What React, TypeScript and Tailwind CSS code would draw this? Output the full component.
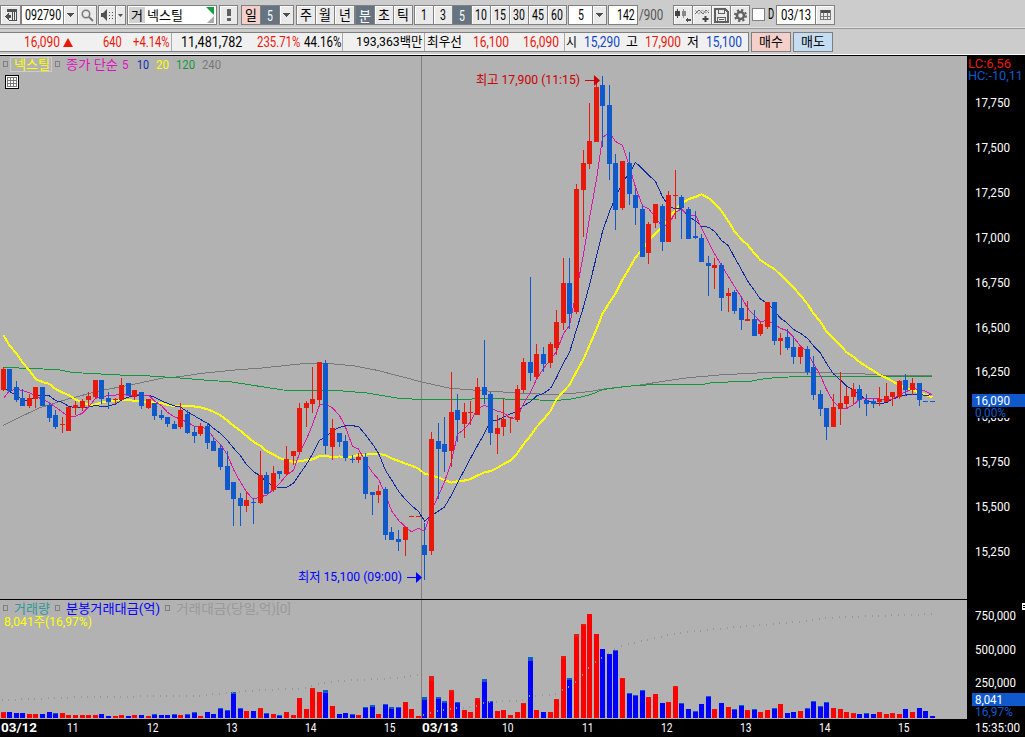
import React, { useLayoutEffect, useRef, useState } from "react";
import clsx from "clsx";

// [high, body top, body bottom, low, up]
const candles = [
  [367, 369, 390, 391, 1], [369, 369, 391, 392, 0], [381, 387, 400, 402, 0], [389, 398, 406, 406, 0],
  [394, 398, 406, 408, 1], [387, 387, 399, 408, 1], [387, 387, 406, 406, 0], [403, 405, 418, 422, 0],
  [410, 415, 427, 429, 0], [417, 424, 425, 433, 1], [407, 407, 431, 431, 1], [401, 405, 408, 415, 1],
  [399, 401, 408, 411, 1], [392, 396, 400, 406, 1], [380, 380, 397, 399, 1], [380, 380, 399, 404, 0],
  [392, 398, 402, 409, 0], [398, 399, 400, 404, 1], [378, 385, 400, 400, 1], [383, 383, 395, 396, 0],
  [390, 390, 397, 400, 1], [392, 392, 406, 409, 0], [399, 399, 408, 409, 1], [403, 403, 416, 420, 0],
  [410, 415, 418, 420, 0], [417, 417, 424, 427, 0], [421, 424, 429, 429, 0], [403, 410, 427, 429, 1],
  [410, 414, 433, 434, 0], [426, 432, 436, 443, 0], [423, 426, 434, 436, 1], [423, 426, 443, 449, 0],
  [437, 441, 451, 451, 0], [444, 448, 467, 470, 0], [451, 466, 490, 490, 0], [482, 482, 499, 526, 0],
  [493, 498, 506, 526, 0], [491, 500, 506, 512, 1], [498, 502, 503, 524, 0], [451, 475, 503, 504, 1],
  [472, 475, 494, 494, 0], [466, 473, 490, 492, 1], [471, 471, 474, 479, 0], [446, 459, 474, 476, 1],
  [451, 451, 456, 465, 1], [403, 408, 452, 454, 1], [401, 403, 408, 427, 1], [367, 399, 404, 413, 1],
  [362, 362, 400, 406, 1], [360, 363, 446, 454, 0], [419, 428, 447, 460, 1], [433, 433, 442, 447, 0],
  [435, 441, 458, 461, 0], [455, 459, 460, 463, 0], [453, 457, 460, 463, 1], [453, 457, 494, 499, 0],
  [492, 492, 495, 515, 0], [485, 491, 495, 503, 1], [487, 489, 535, 540, 0], [527, 532, 540, 540, 0],
  [530, 539, 542, 551, 0], [527, 527, 540, 556, 1], [516, 516, 517, 517, 1], [516, 516, 517, 517, 1],
  [523, 545, 555, 580, 0], [432, 439, 551, 555, 1], [423, 441, 449, 499, 0], [417, 444, 452, 472, 0],
  [372, 412, 451, 467, 1], [394, 410, 420, 442, 0], [403, 412, 424, 438, 1], [401, 412, 413, 425, 1],
  [378, 387, 415, 415, 1], [340, 387, 395, 404, 0], [392, 394, 433, 445, 0], [415, 428, 434, 454, 1],
  [399, 419, 427, 436, 1], [417, 417, 418, 433, 1], [385, 389, 420, 422, 1], [358, 362, 390, 393, 1],
  [277, 362, 373, 381, 0], [344, 354, 377, 379, 1], [347, 354, 364, 372, 0], [342, 344, 363, 368, 1],
  [310, 322, 348, 355, 1], [258, 283, 323, 330, 1], [258, 283, 314, 329, 0], [184, 189, 312, 314, 1],
  [150, 163, 190, 237, 1], [103, 141, 164, 169, 1], [80, 87, 142, 142, 1], [76, 85, 106, 147, 0],
  [85, 105, 164, 180, 0], [154, 163, 210, 230, 0], [161, 161, 208, 210, 1], [152, 163, 194, 205, 0],
  [189, 195, 208, 225, 0], [205, 209, 257, 257, 0], [222, 224, 253, 264, 1], [204, 204, 223, 228, 1],
  [204, 206, 242, 251, 0], [191, 195, 242, 242, 1], [170, 195, 196, 219, 1], [195, 197, 208, 239, 0],
  [207, 209, 239, 239, 0], [211, 236, 238, 239, 0], [234, 238, 262, 262, 0], [256, 263, 266, 296, 0],
  [258, 265, 268, 289, 1], [263, 265, 298, 311, 0], [288, 293, 296, 312, 1], [290, 292, 311, 314, 0],
  [297, 308, 320, 330, 0], [301, 319, 321, 321, 1], [310, 319, 336, 336, 0], [322, 324, 334, 336, 1],
  [302, 302, 327, 329, 1], [302, 302, 341, 345, 0], [333, 338, 341, 355, 1], [329, 337, 348, 350, 0],
  [337, 347, 357, 364, 0], [347, 347, 357, 364, 1], [346, 349, 372, 375, 0], [356, 367, 395, 400, 0],
  [390, 394, 409, 416, 0], [408, 408, 427, 440, 0], [394, 407, 427, 427, 1], [372, 403, 409, 425, 1],
  [387, 396, 404, 408, 1], [383, 389, 397, 405, 1], [385, 389, 400, 408, 0], [394, 400, 404, 416, 0],
  [399, 401, 404, 408, 0], [387, 399, 402, 406, 1], [383, 396, 402, 402, 1], [392, 392, 397, 406, 1],
  [380, 381, 397, 399, 1], [374, 380, 390, 396, 0], [378, 383, 390, 395, 1], [383, 383, 400, 406, 0],
  [401, 401, 402, 402, 0], [401, 401, 402, 402, 0],
];

// volume heights, one per candle
const volumes = [
  6, 6, 5, 5, 4, 4, 4, 6, 5, 5, 3, 3, 3, 3, 3, 4, 2, 2, 3, 2, 3, 3, 2, 4, 3, 3, 4, 3, 4, 6, 2, 6, 4, 10, 8, 26, 10, 7, 7, 10,
  5, 4, 3, 6, 3, 20, 9, 30, 26, 28, 12, 4, 5, 4, 3, 11, 13, 4, 14, 11, 11, 16, 9, 2, 21, 42, 21, 17, 28, 16, 8, 6, 20, 39, 17,
  7, 8, 3, 6, 15, 61, 8, 6, 6, 19, 62, 40, 84, 94, 104, 84, 69, 64, 68, 40, 25, 23, 28, 21, 24, 15, 16, 32, 15, 9, 7, 14, 22,
  9, 15, 11, 9, 13, 8, 9, 6, 8, 10, 14, 5, 6, 7, 10, 17, 12, 16, 10, 9, 6, 5, 4, 5, 4, 6, 4, 5, 4, 9, 6, 10, 7, 2,
];

// how far the traded amount stays below the volume
const caps: Record<number, number> = {
  0: 1, 8: 1, 23: 1, 26: 1, 28: 1, 29: 1, 33: 1, 34: 1, 35: 2, 36: 1, 39: 1, 40: 1, 42: 1, 47: 2, 49: 3, 53: 1, 55: 1,
  56: 2, 58: 1, 59: 2, 60: 1, 64: 3, 65: 5, 66: 2, 67: 2, 68: 2, 69: 1, 72: 2, 73: 3, 74: 1, 79: 1, 80: 4, 84: 1, 85: 3,
  86: 2, 87: 3, 88: 2, 93: 1, 94: 1, 95: 1, 96: 1, 97: 1, 102: 1, 103: 1, 105: 1, 107: 1, 111: 1, 112: 1, 114: 1, 117: 1,
  122: 1, 123: 1, 124: 1, 125: 1, 129: 1, 131: 1, 135: 1,
};

// [index, y] knots of the cumulative amount, restarted every day
const cumulative = [
  [[0, 699], [5, 698], [10, 696.5], [20, 695.5], [30, 694.5], [34, 692], [36, 690.5], [40, 689], [45, 687.5], [46, 686.5],
   [47, 684.5], [48, 682.5], [50, 680.5], [54, 679], [57, 678], [60, 676.5], [63, 674]],
  [[64, 714], [65, 712], [66, 710], [67, 709], [68, 708], [69, 707], [71, 706], [72, 705], [73, 702], [76, 700], [78, 700],
   [79, 699], [80, 695], [82, 694], [84, 693], [85, 689], [86, 686], [87, 681], [88, 674], [89, 667], [90, 661], [91, 657],
   [92, 652], [93, 648], [94, 645], [95, 643], [97, 640], [99, 637], [102, 633], [104, 631], [107, 629], [110, 627],
   [113, 625], [116, 624], [118, 622], [121, 621], [123, 619], [125, 617], [128, 616], [132, 615], [137, 614], [141, 613]],
];

const ma120 =
  "3,367.5 35,368.5 60,370 73,372.5 120,375 150,376 180,378 210,380.5 230,381.7 253,385.3 283,390 343,391 367,393 400,398.5 423,399.5 457,400 477,398.7 500,398.5 510,399.5 557,400.3 570,399.3 583,396.7 593,393.7 603,389.5 627,386.3 653,384.5 703,384.3 713,382.5 750,381.3 767,378.3 797,376.5 932,376.5";
const ma240 =
  "3,425.5 20,417 40,407.7 67,399.3 100,390.7 127,385.7 163,378 180,376.7 200,373.5 240,369.5 257,368.5 303,363.7 330,363.7 353,365.7 377,370.3 407,378 423,382.3 450,388.3 477,390.3 510,392.5 550,394.5 570,393.7 590,391.5 607,388.5 640,385 667,380.7 690,377.5 723,374.7 767,372.5 833,373 865,374 890,375.5 932,375.5";

const px = (i: number) => Math.floor(3 + 6.591 * i);
const closes = candles.map(([, t, b, , up]) => (up ? t : b - 1));

function average(n: number, head: number[]) {
  return closes
    .map((_, i) => {
      if (i < head.length) return head[i];
      const part = closes.slice(i - n + 1, i + 1);
      return part.reduce((a, b) => a + b, 0) / n;
    })
    .map((y, i) => `${px(i) + 0.5},${(y + 0.5).toFixed(1)}`)
    .join(" ");
}

const ma5 = average(5, [398, 390, 389, 390]);
const ma10 = average(10, [387, 391, 395, 399, 401, 395, 394.5, 395.5, 400]);
const ma20 = average(20, [
  334.5, 345, 353, 362, 370, 378.5, 381.5, 383.5, 388.5, 392, 394.5, 399, 402, 404, 404, 402, 400.5, 400, 399,
]);

function interpolate(knots: number[][], i: number) {
  for (let k = 1; k < knots.length; k++) {
    const [x0, y0] = knots[k - 1];
    const [x1, y1] = knots[k];
    if (i <= x1) return y0 + ((y1 - y0) * (i - x0)) / (x1 - x0);
  }
  return knots[knots.length - 1][1];
}

const font = "font-['Roboto','Noto_Sans_CJK_KR',sans-serif]";

// Squeezes or stretches one line of text to the width of its box
function Fit({ children, className }: { children: string; className?: string }) {
  const box = useRef<HTMLSpanElement>(null);
  const text = useRef<HTMLSpanElement>(null);
  const [scale, setScale] = useState(1);

  useLayoutEffect(() => {
    if (!box.current || !text.current) return;
    setScale(box.current.clientWidth / text.current.offsetWidth);
  }, [children]);

  return (
    <span ref={box} className={clsx("block shrink-0 whitespace-nowrap", className)}>
      <span ref={text} className="inline-block origin-left" style={{ transform: `scaleX(${scale})` }}>
        {children}
      </span>
    </span>
  );
}

interface LabelProps {
  x: number;
  y: number;
  w: number;
  fill: string;
  size?: number;
  bold?: boolean;
  children: string;
}

// y is the vertical middle of the digits
function Label({ x, y, w, fill, size = 13.5, bold, children }: LabelProps) {
  return (
    <text
      x={x}
      y={y + 4.5}
      fill={fill}
      fontSize={size}
      fontWeight={bold ? 700 : 400}
      textLength={w}
      lengthAdjust="spacingAndGlyphs"
    >
      {children}
    </text>
  );
}

function Cell({ className, children }: { className?: string; children?: React.ReactNode }) {
  return (
    <div
      className={clsx(
        "-ml-px flex h-5 shrink-0 items-center justify-center border border-[#808080] text-[14px] leading-none",
        className
      )}
    >
      {children}
    </div>
  );
}

function Caret() {
  return (
    <svg width="7" height="4" shapeRendering="crispEdges">
      <path d="M0 0h7L3.5 4z" fill="#505050" />
    </svg>
  );
}

const face = "bg-[#eaeaea] shadow-[inset_1px_1px_0_#fff]";

function Toolbar() {
  return (
    <div className="flex h-[28px] items-start border-b border-[#e0e0e0] pt-[5px] text-black">
      <Cell className={clsx("ml-0 w-[21px]", face)}>
        <svg width="14" height="14" shapeRendering="crispEdges">
          <path d="M3 1.500h9.500v11H5M8.500 1v12M10.500 1v12" fill="none" stroke="#505050" />
          <path d="M3 2h9v2H3zM1 8l4-4v3h2v3H5v3z" fill="#505050" />
        </svg>
      </Cell>
      <Cell className="ml-0 w-[43px] bg-white">
        <Fit className="w-[36px]">092790</Fit>
      </Cell>
      <Cell className={clsx("w-[15px]", face)}><Caret /></Cell>
      <Cell className={clsx("w-[20px]", face)}>
        <svg width="13" height="13" fill="none" stroke="#777">
          <circle cx="5" cy="5" r="3.7" strokeWidth="1.5" />
          <path d="M8 8l4 4" strokeWidth="2" />
        </svg>
      </Cell>
      <Cell className={clsx("ml-px w-[18px]", face)}>
        <svg width="13" height="13" fill="#505050">
          <path d="M0 4h2l4-4v12L2 8H0z" />
          <path d="M8 3h1v1H8zM8 6h1v1H8zM8 9h1v1H8zM11 3h1v1h-1zM11 6h1v1h-1zM11 9h1v1h-1z" />
        </svg>
      </Cell>
      <Cell className={clsx("w-[11px]", face)}>
        <svg width="5" height="3"><path d="M0 0h5L2.500 3z" fill="#505050" /></svg>
      </Cell>
      <Cell className="relative ml-px w-[90px] justify-start bg-white pl-px">
        <div className="flex h-[16px] w-[16px] items-center justify-center bg-[#d2d2d2] text-[13px]">
          <Fit className="w-[12px]">거</Fit>
        </div>
        <Fit className="ml-[2px] w-[36px] text-[13px]">넥스틸</Fit>
        <svg className="absolute right-px top-px" width="9" height="16">
          <path d="M0 0h8v8z" fill="#10a040" />
          <path d="M8 9v7H1z" fill="#aaa" />
        </svg>
      </Cell>
      <Cell className={clsx("ml-[2px] w-[19px]", face)}>
        <svg width="4" height="12" shapeRendering="crispEdges">
          <path d="M0 0h4v7H0zM0 9h4v3H0z" fill="#606060" />
        </svg>
      </Cell>
      <Cell className="ml-[3px] w-[20px] bg-[#f5d0ca] text-[13px]"><Fit className="w-[12px]">일</Fit></Cell>
      <Cell className="w-[20px] bg-[#667380] pt-[2px] text-white"><Fit className="w-[6px]">5</Fit></Cell>
      <Cell className={clsx("w-[15px]", face)}><Caret /></Cell>
      {[
        ["주", "ml-[2px] w-[20px]", face],
        ["월", "w-[20px]", face],
        ["년", "w-[21px]", face],
        ["분", "ml-0 w-[20px]", "bg-[#667380] text-white pt-[2px]"],
        ["초", "w-[20px]", face],
        ["틱", "w-[20px]", face],
      ].map(([t, w, look]) => (
        <Cell key={t} className={clsx(w, look, "text-[13px]")}><Fit className="w-[12px]">{t}</Fit></Cell>
      ))}
      <Cell className={clsx("ml-px w-[20px]", face)}><Fit className="w-[6px]">1</Fit></Cell>
      <Cell className={clsx("w-[20px]", face)}><Fit className="w-[6px]">3</Fit></Cell>
      <Cell className="w-[20px] bg-[#667380] pt-[2px] text-white"><Fit className="w-[6px]">5</Fit></Cell>
      {["10", "15", "30", "45", "60"].map((t) => (
        <Cell key={t} className={clsx("w-[20px]", face)}><Fit className="w-[12px]">{t}</Fit></Cell>
      ))}
      <Cell className="ml-px w-[25px] bg-white"><Fit className="w-[6px]">5</Fit></Cell>
      <Cell className={clsx("w-[15px]", face)}><Caret /></Cell>
      <Cell className="ml-px w-[30px] justify-end bg-white pr-[2px]"><Fit className="w-[18px]">142</Fit></Cell>
      <Fit className="ml-px mt-[3px] w-[24px] text-[14px] leading-none text-[#555]">/900</Fit>
      <Cell className={clsx("ml-[10px] w-[20px]", face)}>
        <svg width="17" height="15" shapeRendering="crispEdges">
          <path d="M0 3h5v5H0zM2 1h1v9H2z" fill="#444" />
          <path d="M7 3h4v5H7zM8 1h1v9H8z" fill="#888" />
          <path d="M10 12l3-3v6zM11 11h5v2h-5z" fill="#505050" />
        </svg>
      </Cell>
      <Cell className={clsx("w-[20px]", face)}>
        <svg width="17" height="15" fill="none">
          <path d="M1 6l4-4 4 4 3-4 3 3" stroke="#666" />
          <path d="M1 2l4 4 3-4 4 3 3-3" stroke="#aaa" />
          <path d="M11.500 8v6M8.500 11h6" stroke="#444" strokeWidth="2" />
        </svg>
      </Cell>
      <Cell className={clsx("w-[20px]", face)}>
        <svg width="15" height="15" fill="none" stroke="#606060" shapeRendering="crispEdges">
          <path d="M1 1h10l3 3v10H1z" strokeWidth="1.500" />
          <path d="M4.500 1v4h6V1M3.500 14V9h8v5M5 11.500h5" />
        </svg>
      </Cell>
      <Cell className={clsx("w-[20px]", face)}>
        <svg width="13" height="13" fill="none" stroke="#606060">
          <circle cx="6.500" cy="6.500" r="3.500" strokeWidth="2.500" />
          <circle cx="6.500" cy="6.500" r="5.500" strokeWidth="2" strokeDasharray="2.200 2.120" />
        </svg>
      </Cell>
      <div className="ml-[2px] mt-[3px] size-[13px] shrink-0 border border-[#808080] bg-white" />
      <Fit className="ml-[3px] mt-[2px] w-[6px] text-[14px] leading-none">D</Fit>
      <Cell className="ml-[2px] w-[40px] bg-white"><Fit className="w-[30px]">03/13</Fit></Cell>
      <Cell className={clsx("w-[20px]", face)}>
        <svg width="11" height="10" shapeRendering="crispEdges">
          <path d="M0 0h11v3H0z" fill="#505050" />
          <path d="M.5 0v9.500h10V0M3.500 3v6M7.500 3v6M0 6.500h11" fill="none" stroke="#777" />
        </svg>
      </Cell>
    </div>
  );
}

const divider = <div className="h-[18px] w-px shrink-0 bg-[#aaa]" />;

function QuoteBar() {
  return (
    <div className="flex h-[26px] items-start border-t border-[#999] pt-[3px] text-[14px] leading-[18px] text-black">
      <div className="flex h-5 w-[749px] shrink-0 border-y border-r border-[#808080] bg-[#f0f0f0]">
        <Fit className="ml-[24px] w-[36px] text-[#e8190b]">16,090</Fit>
        <svg className="ml-[3px] mt-[5px]" width="10" height="9">
          <path d="M5 0l5 9H0z" fill="#e8190b" />
        </svg>
        <Fit className="ml-[30px] w-[19px] text-[#e8190b]">640</Fit>
        <Fit className="ml-[11px] w-[37px] text-[#e8190b]">+4.14%</Fit>
        <div className="w-px shrink-0" />
        {divider}
        <Fit className="ml-[9px] w-[61px]">11,481,782</Fit>
        <Fit className="ml-[15px] w-[43px] text-[#e8190b]">235.71%</Fit>
        <Fit className="ml-[4px] w-[37px]">44.16%</Fit>
        <div className="w-px shrink-0" />
        {divider}
        <Fit className="ml-[13px] w-[66px] text-[13px]">193,363백만</Fit>
        <div className="w-[2px] shrink-0" />
        {divider}
        <Fit className="ml-[2px] w-[35px] text-[13px]">최우선</Fit>
        <Fit className="ml-[11px] w-[36px] text-[#e8190b]">16,100</Fit>
        <Fit className="ml-[14px] w-[36px] text-[#e8190b]">16,090</Fit>
        <div className="w-[5px] shrink-0" />
        {divider}
        <Fit className="ml-px w-[11px] text-[13px]">시</Fit>
        <Fit className="ml-[7px] w-[36px] text-[#1146c4]">15,290</Fit>
        <Fit className="ml-[6px] w-[12px] text-[13px]">고</Fit>
        <Fit className="ml-[7px] w-[36px] text-[#e8190b]">17,900</Fit>
        <Fit className="ml-[6px] w-[12px] text-[13px]">저</Fit>
        <Fit className="ml-[7px] w-[36px] text-[#1146c4]">15,100</Fit>
      </div>
      <div className="ml-[2px] flex h-5 w-[40px] shrink-0 justify-center border border-[#808080] bg-[#f5d0ca] text-[13px]">
        <Fit className="w-[24px]">매수</Fit>
      </div>
      <div className="ml-[2px] flex h-5 w-[40px] shrink-0 justify-center border border-[#808080] bg-[#c5ddf3] text-[13px]">
        <Fit className="w-[24px]">매도</Fit>
      </div>
    </div>
  );
}

function Marker({ x, y }: { x: number; y: number }) {
  return <rect x={x + 0.5} y={y + 0.5} width="4" height="5" fill="none" stroke="#808080" />;
}

function PriceChart() {
  return (
    <svg className={clsx("block", font)} width="967" height="543" viewBox="0 56 967 543">
      <g shapeRendering="crispEdges">
        <path d="M421.500 56V599" stroke="#808080" />
        <g fill="none">
          <polyline points={ma240} stroke="#787878" />
          <polyline points={ma120} stroke="#109838" />
          <polyline points={ma20} stroke="#ffff00" strokeWidth="2" />
          <polyline points={ma10} stroke="#1028a0" />
          <polyline points={ma5} stroke="#d818a8" />
        </g>
        {candles.map(([h, t, b, l, up], i) => (
          <g key={i} fill={up ? "#e8190b" : "#1059cd"}>
            <rect x={px(i)} y={h} width="1" height={l - h} />
            <rect x={px(i) - 2} y={t} width="5" height={b - t} />
          </g>
        ))}
        <Marker x={3} y={61} />
        <rect x="10.500" y="57.500" width="41" height="14" fill="none" stroke="#ccc" />
        <Marker x={55} y={61} />
        <rect x="5.500" y="75.500" width="13" height="13" fill="#fff" stroke="#000" />
        <path d="M7.500 77.500h9v9h-9zM10.500 77v10M13.500 77v10M7 80.500h10M7 83.500h10" fill="none" stroke="#777" />
        <path d="M585 80.500h10" stroke="#c00" />
        <path d="M407 577.500h10" stroke="#00f" />
      </g>
      <path d="M594 75l6 5.500-6 5.500z" fill="#c00" />
      <path d="M416 572l6 5.500-6 5.500z" fill="#00f" />
      <Label x={14} y={64} w={36} fill="#ff0" size={13}>넥스틸</Label>
      <Label x={66} y={64} w={52} fill="#e010c0" size={13}>종가 단순</Label>
      <Label x={122} y={64} w={6.5} fill="#e010c0">5</Label>
      <Label x={137} y={64} w={12} fill="#1028b0">10</Label>
      <Label x={156} y={64} w={13} fill="#ff0">20</Label>
      <Label x={176} y={64} w={19} fill="#109838">120</Label>
      <Label x={202} y={64} w={19} fill="#787878">240</Label>
      <Label x={476} y={79} w={104} fill="#c00" size={13}>최고 17,900 (11:15)</Label>
      <Label x={298} y={576} w={104} fill="#00f" size={13}>최저 15,100 (09:00)</Label>
    </svg>
  );
}

function VolumeChart() {
  return (
    <svg className={clsx("block", font)} width="967" height="119" viewBox="0 600 967 119">
      <g shapeRendering="crispEdges">
        <path d="M421.500 600V719" stroke="#808080" />
        {volumes.map((v, i) => {
          const up = candles[i][4];
          const cap = caps[i] ?? 0;
          return (
            <g key={i}>
              <rect x={px(i) - 2} y={718 - v} width="5" height={v} fill={up ? "#e8190b" : "#1059cd"} />
              <rect x={px(i) - 2} y={718 - v + cap} width="5" height={v - cap} fill={up ? "#f00" : "#00f"} />
            </g>
          );
        })}
        {volumes.map((_, i) => (
          <rect
            key={i}
            x={px(i) - 1}
            y={Math.round(interpolate(cumulative[i < 64 ? 0 : 1], i))}
            width="1"
            height="2"
            fill="#999"
          />
        ))}
        <Marker x={3} y={605} />
        <Marker x={55} y={605} />
        <Marker x={165} y={605} />
      </g>
      <Label x={14} y={608} w={36} fill="#2e9898" size={13}>거래량</Label>
      <Label x={66} y={608} w={94} fill="#00f" size={13}>분봉거래대금(억)</Label>
      <Label x={176} y={608} w={115} fill="#999" size={13}>거래대금(당일,억)[0]</Label>
      <Label x={4} y={621} w={88} fill="#ff0" size={13}>8,041주(16,97%)</Label>
    </svg>
  );
}

const hours: [number, string][] = [
  [67, "11"], [147, "12"], [226, "13"], [305, "14"], [384, "15"], [502, "10"],
  [582, "11"], [661, "12"], [740, "13"], [819, "14"], [898, "15"],
];

function TimeAxis() {
  return (
    <svg className={clsx("block bg-black", font)} width="967" height="18" viewBox="0 719 967 18">
      <Label x={1} y={727} w={36} fill="#fff" bold>03/12</Label>
      <Label x={422} y={727} w={36} fill="#fff" bold>03/13</Label>
      {hours.map(([x, t]) => (
        <Label key={x} x={x} y={727} w={11.5} fill="#fff">{t}</Label>
      ))}
    </svg>
  );
}

const prices: [number, string][] = [
  [102, "17,750"], [147, "17,500"], [192, "17,250"], [237, "17,000"], [282, "16,750"], [327, "16,500"],
  [371, "16,250"], [416, "16,000"], [461, "15,750"], [506, "15,500"], [551, "15,250"],
];

function ValueAxis() {
  return (
    <svg className={clsx("block bg-black", font)} width="58" height="681" viewBox="967 56 58 681">
      <Label x={968} y={63} w={43} fill="#e8190b" size={13}>LC:6,56</Label>
      <Label x={968} y={75} w={55} fill="#1059cd" size={13}>HC:-10,11</Label>
      {prices.map(([y, t]) => (
        <Label key={t} x={975} y={y} w={35} fill="#fff">{t}</Label>
      ))}
      <rect x="972" y="407" width="53" height="11" fill="#000" />
      <rect x="972" y="394" width="53" height="13" fill="#1059cd" />
      <Label x={975} y={400} w={35} fill="#fff" size={13}>16,090</Label>
      <Label x={975} y={412} w={31} fill="#1059cd" size={13}>0,00%</Label>
      <Label x={975} y={615} w={41} fill="#fff">750,000</Label>
      <Label x={975} y={649} w={41} fill="#fff">500,000</Label>
      <Label x={975} y={682} w={41} fill="#fff">250,000</Label>
      <rect x="972" y="693" width="53" height="13" fill="#1059cd" />
      <Label x={975} y={699} w={28} fill="#fff" size={13}>8,041</Label>
      <Label x={975} y={711} w={38} fill="#1059cd" size={13}>16,97%</Label>
      <Label x={975} y={727} w={45} fill="#fff" size={13}>15:35:00</Label>
      <path d="M1022 603h3v2h-2v1h2v1h-2v1h2v2h-3z" fill="#fff" />
    </svg>
  );
}

export default function App() {
  return (
    <div className={clsx("h-[737px] w-[1025px] overflow-hidden bg-[#ccc]", font)}>
      <Toolbar />
      <QuoteBar />
      <div className="h-px bg-white" />
      <div className="h-px bg-black" />
      <div className="flex bg-[#b2b2b2]">
        <div className="w-[967px] shrink-0">
          <PriceChart />
          <div className="h-px bg-black" />
          <VolumeChart />
          <TimeAxis />
        </div>
        <ValueAxis />
      </div>
    </div>
  );
}
